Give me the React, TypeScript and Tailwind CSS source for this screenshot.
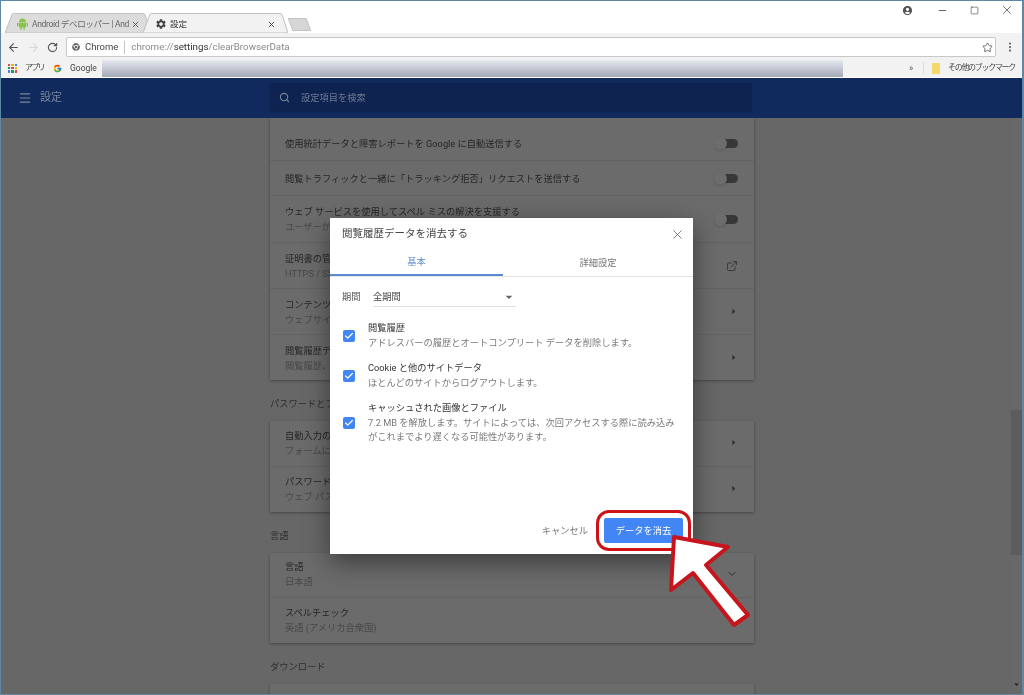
import React from "react";
import { Menu, Search, Star, Check, X, ArrowLeft, ArrowRight, RotateCw, EllipsisVertical, Minus, Square, ChevronDown, ExternalLink } from "lucide-react";
import { FaChrome } from "react-icons/fa";
import { FcGoogle } from "react-icons/fc";
import { MdSettings, MdAccountCircle, MdArrowDropDown, MdArrowRight } from "react-icons/md";

function TabShape({ fill, stroke }: { fill: string; stroke: string }) {
  return (
    <svg className="absolute inset-0 h-full w-full" viewBox="0 0 146 21" preserveAspectRatio="none">
      <path d="M0 21 L7 1.5 Q8 0.5 9 0.5 L138 0.5 Q139 0.5 140 1.5 L146 21 Z" fill={fill} stroke={stroke} strokeWidth="1" />
    </svg>
  );
}

function AndroidIcon() {
  return (
    <svg width="11" height="12" viewBox="0 0 11 12" className="relative shrink-0" fill="#8bc34a">
      <path d="M2 4 A3.5 3.5 0 0 1 9 4 Z" />
      <rect x="2" y="4.6" width="7" height="5" rx="0.6" />
      <rect x="0" y="4.6" width="1.4" height="4" rx="0.7" />
      <rect x="9.6" y="4.6" width="1.4" height="4" rx="0.7" />
      <rect x="3.2" y="9" width="1.5" height="3" rx="0.7" />
      <rect x="6.3" y="9" width="1.5" height="3" rx="0.7" />
    </svg>
  );
}

function Toggle() {
  return (
    <div className="relative h-[9px] w-[24px] shrink-0">
      <div className="absolute left-[6px] top-0 h-[9px] w-[18px] rounded-full bg-[#383838]" />
      <div className="absolute left-0 top-[-2px] h-[13px] w-[13px] rounded-full bg-[#6d6d6d] shadow-sm" />
    </div>
  );
}

function Row({ title, sub, right, className }: { title: string; sub?: string; right?: React.ReactNode; className: string }) {
  return (
    <div className={`flex items-center justify-between border-b border-[#636363] pl-[15px] pr-[16px] last:border-b-0 ${className}`}>
      <div className="flex flex-col leading-[15px]">
        <span className="text-[9.25px] text-[#262626]">{title}</span>
        {sub && <span className="text-[9.25px] text-[#484848]">{sub}</span>}
      </div>
      {right}
    </div>
  );
}

const Caret = () => <MdArrowRight size={13} className="mr-[-2px] text-[#2c2c2c]" />;

function Card({ children, className = "" }: { children: React.ReactNode; className?: string }) {
  return <div className={`rounded-[1px] bg-[#6b6b6b] shadow-[0_1px_3px_rgba(0,0,0,0.35)] ${className}`}>{children}</div>;
}

function Section({ children, className }: { children: React.ReactNode; className: string }) {
  return <div className={`flex items-center text-[9.25px] text-[#2e2e2e] ${className}`}>{children}</div>;
}

function CheckItem({ title, lines }: { title: string; lines: string[] }) {
  return (
    <div className="flex items-center">
      <div className="ml-[13px] flex h-[12px] w-[12px] shrink-0 items-center justify-center rounded-[2px] bg-[#4285f4]">
        <Check size={10} strokeWidth={3} className="text-white" />
      </div>
      <div className="ml-[13px] flex flex-col text-[9.25px] leading-[14.5px]">
        <span className="text-[#333333]">{title}</span>
        {lines.map((l) => (
          <span key={l} className="text-[#7a7a7a]">{l}</span>
        ))}
      </div>
    </div>
  );
}

export default function App() {
  return (
    <div className="relative flex h-[695px] w-[1024px] flex-col overflow-hidden border-l border-r-2 border-b border-[#5d88a6] bg-[#676767] font-['Roboto','Noto_Sans_CJK_JP',sans-serif] blur-[0.4px]">
      {/* Title / tab strip */}
      <div className="flex h-[33px] shrink-0 items-end border-t border-[#5d88a6] bg-white pl-[4px]">
        <div className="relative flex h-[20px] w-[146px] items-center pl-[12px] pt-[2px]">
          <TabShape fill="#dcdcdc" stroke="#c0c0c0" />
          <AndroidIcon />
          <span className="relative ml-[4px] w-[98px] overflow-hidden whitespace-nowrap text-[8.5px] tracking-[-0.35px] text-[#666666]">Android デベロッパー | And</span>
          <X size={9} strokeWidth={2.5} className="relative ml-[1px] shrink-0 text-[#555555]" />
        </div>
        <div className="relative ml-[-8px] flex h-[20px] w-[145px] items-center pl-[12px] pt-[2px]">
          <TabShape fill="#f2f2f2" stroke="#bdbdbd" />
          <MdSettings size={12} className="relative shrink-0 text-[#444444]" />
          <span className="relative ml-[3px] w-[97px] text-[8.5px] text-[#333333]">設定</span>
          <X size={9} strokeWidth={2.5} className="relative shrink-0 text-[#444444]" />
        </div>
        <div className="mb-[2px] ml-[2px] h-[13px] w-[19px] skew-x-[20deg] rounded-[1px] border border-[#c4c4c4] bg-[#d6d6d6]" />
        <div className="flex-1" />
        <div className="mb-[16px] flex items-center text-[#555555]">
          <MdAccountCircle size={11} className="mr-[24px]" />
          <Minus size={11} className="mr-[22px]" />
          <Square size={9} strokeWidth={1.5} className="mr-[21px] text-[#333333]" />
          <X size={14} strokeWidth={1.2} className="mr-[8px] text-[#333333]" />
        </div>
      </div>

      {/* Toolbar */}
      <div className="flex h-[26px] shrink-0 items-center bg-[#f2f2f2] pl-[6px] pt-[2px]">
        <ArrowLeft size={13} className="text-[#555555]" />
        <ArrowRight size={13} className="ml-[7px] text-[#d8d8d8]" />
        <RotateCw size={11} strokeWidth={2.4} className="ml-[7px] text-[#555555]" />
        <div className="ml-[8px] flex h-[20px] w-[930px] items-center rounded-[2px] border border-[#c8c8c8] bg-white pl-[5px] pr-[2px]">
          <FaChrome size={8} className="text-[#666666]" />
          <span className="ml-[5px] text-[9.5px] text-[#444444]">Chrome</span>
          <span className="mx-[6px] h-[13px] w-px bg-[#c4c4c4]" />
          <span className="text-[9.75px] text-[#8a8a8a]">chrome://<span className="text-[#333333]">settings</span>/clearBrowserData</span>
          <span className="flex-1" />
          <Star size={11} strokeWidth={1.8} className="text-[#555555]" />
        </div>
        <EllipsisVertical size={12} strokeWidth={2.5} className="ml-[8px] text-[#666666]" />
      </div>

      {/* Bookmarks */}
      <div className="flex h-[19px] shrink-0 items-center border-b border-white bg-[#f2f2f2] pl-[7px]">
        <div className="grid h-[9px] w-[9px] shrink-0 grid-cols-3 gap-px">
          <i className="bg-[#e04a3f]" /><i className="bg-[#f4b400]" /><i className="bg-[#4285f4]" />
          <i className="bg-[#0f9d58]" /><i className="bg-[#e04a3f]" /><i className="bg-[#f4b400]" />
          <i className="bg-[#4285f4]" /><i className="bg-[#0f9d58]" /><i className="bg-[#e04a3f]" />
        </div>
        <span className="ml-[8px] w-[28px] shrink-0 whitespace-nowrap text-[8px] tracking-[-1.8px] text-[#444444]">アプリ</span>
        <FcGoogle size={9} className="shrink-0" />
        <span className="ml-[8px] w-[27px] shrink-0 text-[8.5px] text-[#444444]">Google</span>
        <div className="ml-[5px] h-[17px] w-[741px] shrink-0 bg-gradient-to-b from-[#e6e8ee] to-[#a4a9b8]" />
        <span className="ml-[66px] w-[6px] shrink-0 text-[9px] leading-none text-[#555555]">»</span>
        <span className="ml-[8px] h-[12px] w-px shrink-0 bg-[#dcdcdc]" />
        <div className="ml-[8px] h-[11px] w-[8px] shrink-0 rounded-[1px] bg-[#f6d96b]" />
        <span className="ml-[8px] whitespace-nowrap text-[8px] tracking-[-1.3px] text-[#444444]">その他のブックマーク</span>
      </div>

      {/* Settings header */}
      <div className="flex h-[40px] shrink-0 items-center bg-[#112a5e]">
        <Menu size={14} className="ml-[17px] shrink-0 text-[#7c8599]" />
        <span className="ml-[8px] w-[229px] shrink-0 text-[11px] text-[#7c8599]">設定</span>
        <div className="mb-[1px] flex h-[29px] w-[483px] items-center rounded-[1px] bg-[#0e2350]">
          <Search size={11} strokeWidth={2.4} className="ml-[10px] text-[#7c8599]" />
          <span className="ml-[11px] text-[9.25px] text-[#6e7a93]">設定項目を検索</span>
        </div>
      </div>

      {/* Content */}
      <div className="flex min-h-0 flex-1">
        <div className="min-w-0 flex-1 overflow-hidden pl-[269px]">
          <div className="w-[484px]">
            <Card>
              <Row className="h-[43px] pt-[8px]" title="使用統計データと障害レポートを Google に自動送信する" right={<Toggle />} />
              <Row className="h-[35px]" title="閲覧トラフィックと一緒に「トラッキング拒否」リクエストを送信する" right={<Toggle />} />
              <Row className="h-[47px]" title="ウェブ サービスを使用してスペル ミスの解決を支援する" sub="ユーザーがブラウザに入力したテキストを Google に送信します" right={<Toggle />} />
              <Row className="h-[46px]" title="証明書の管理" sub="HTTPS / SSL の証明書と設定を管理します" right={<ExternalLink size={12} className="text-[#3a3a3a]" />} />
              <Row className="h-[46px]" title="コンテンツの設定" sub="ウェブサイトで使用できる情報と表示できるコンテンツを管理します" right={<Caret />} />
              <Row className="h-[45px]" title="閲覧履歴データを消去する" sub="閲覧履歴、Cookie、キャッシュなどを削除します" right={<Caret />} />
            </Card>
            <Section className="h-[41px] pt-[6px]">パスワードとフォーム</Section>
            <Card>
              <Row className="h-[46px] pb-[2px]" title="自動入力の設定" sub="フォームに自動入力するための設定を行います" right={<Caret />} />
              <Row className="h-[45px] pb-[2px]" title="パスワードの管理" sub="ウェブ パスワードの保存を管理します" right={<Caret />} />
            </Card>
            <Section className="h-[41px] pt-[6px]">言語</Section>
            <Card>
              <Row className="h-[45px] pb-[2px]" title="言語" sub="日本語" right={<ChevronDown size={12} className="text-[#2c2c2c]" />} />
              <Row className="h-[45px] pb-[2px]" title="スペルチェック" sub="英語 (アメリカ合衆国)" />
            </Card>
            <Section className="h-[41px] pt-[6px]">ダウンロード</Section>
            <Card className="h-[40px]"> </Card>
          </div>
        </div>
        {/* Scrollbar */}
        <div className="flex w-[11px] shrink-0 flex-col bg-[#686868]">
          <div className="h-[292px]" />
          <div className="h-[145px] bg-[#5c5c5c]" />
          <div className="flex-1" />
          <MdArrowDropDown size={11} className="mb-[4px] text-[#222222]" />
        </div>
      </div>

      {/* Dialog */}
      <div className="absolute left-[329px] top-[218px] flex h-[336px] w-[363px] flex-col bg-white shadow-[0_8px_24px_rgba(0,0,0,0.45)]">
        <div className="flex h-[30px] items-center justify-between pl-[12px] pr-[8px] pt-[2px]">
          <span className="text-[10.5px] text-[#444444]">閲覧履歴データを消去する</span>
          <X size={15} strokeWidth={1.3} className="text-[#666666]" />
        </div>
        <div className="flex h-[29px] border-b border-[#e4e4e4] text-[9.25px]">
          <div className="flex w-[173px] items-center justify-center border-b-2 border-[#5b8ad0] pt-[1px] text-[#5b8ad0]">基本</div>
          <div className="flex flex-1 items-center justify-center pt-[1px] text-[#777777]">詳細設定</div>
        </div>
        <div className="ml-[12px] mt-[10px] flex h-[20px] items-center text-[9.25px] text-[#555555]">
          <span className="w-[31px]">期間</span>
          <div className="flex h-[20px] w-[143px] items-center justify-between border-b border-[#e0e0e0] text-[#444444]">
            全期間
            <MdArrowDropDown size={16} className="mr-[-1px] text-[#666666]" />
          </div>
        </div>
        <div className="mt-[14px] flex flex-col gap-[11px]">
          <CheckItem title="閲覧履歴" lines={["アドレスバーの履歴とオートコンプリート データを削除します。"]} />
          <CheckItem title="Cookie と他のサイトデータ" lines={["ほとんどのサイトからログアウトします。"]} />
          <CheckItem title="キャッシュされた画像とファイル" lines={["7.2 MB を解放します。サイトによっては、次回アクセスする際に読み込み", "がこれまでより遅くなる可能性があります。"]} />
        </div>
        <div className="mb-[11px] mt-auto flex items-center justify-end pr-[10px]">
          <span className="text-[9.25px] text-[#777777]">キャンセル</span>
          <div className="ml-[16px] flex h-[25px] w-[79px] items-center justify-center rounded-[2px] bg-[#4285f4] text-[9.25px] text-white">データを消去</div>
        </div>
      </div>

      {/* Annotation: red outline + arrow */}
      <div className="absolute left-[595px] top-[510px] h-[41px] w-[95px] rounded-[13px] border-[3px] border-[#cc1418]" />
      <svg className="absolute left-[660px] top-[525px]" width="100" height="110" viewBox="660 525 100 110">
        <path d="M673 537 L727 547 L705 565 L747 615 L733 625 L692 573 L670 590 Z" fill="#ffffff" stroke="#c8141c" strokeWidth="4" strokeLinejoin="round" />
      </svg>
    </div>
  );
}
